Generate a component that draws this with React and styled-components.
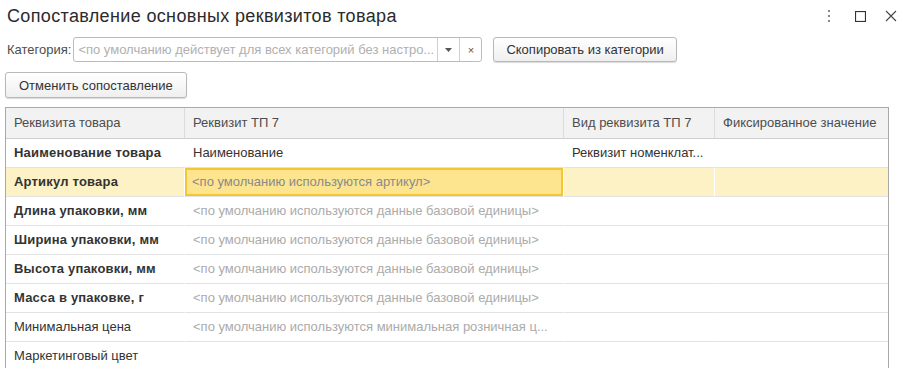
import React from 'react'
import styled, { createGlobalStyle } from 'styled-components'

const GlobalStyle = createGlobalStyle`
  html, body {
    margin: 0;
    padding: 0;
    background: #ffffff;
    overflow: hidden;
  }
  body {
    font-family: "Liberation Sans", Arial, sans-serif;
    font-size: 13px;
    color: #333333;
  }
`

const Window = styled.div`
  width: 907px;
  height: 368px;
  display: flex;
  flex-direction: column;
  overflow: hidden;
  box-sizing: border-box;
  & > * {
    flex-shrink: 0;
  }
`

const TitleBar = styled.div`
  display: flex;
  align-items: center;
  justify-content: space-between;
  height: 32px;
  padding: 0 9px 0 7px;
`

const Title = styled.h1`
  margin: 0;
  font-size: 18px;
  font-weight: 400;
  color: #2b2b2b;
  letter-spacing: 0.35px;
`

const WindowTools = styled.div`
  display: flex;
  align-items: center;
  gap: 17px;
  color: #444444;
`

const ToolIcon = styled.span`
  display: flex;
  align-items: center;
  justify-content: center;
  width: 14px;
  height: 14px;
`

const FieldRow = styled.div`
  display: flex;
  align-items: center;
  padding: 5px 5px 0 7px;
  height: 25px;
`

const Label = styled.span`
  color: #4d4d4d;
  margin-right: 2px;
`

const Combo = styled.div`
  display: flex;
  width: 409px;
  height: 25px;
  box-sizing: border-box;
  border: 1px solid #bcbcbc;
  border-radius: 3px;
  background: #ffffff;
`

const ComboText = styled.div`
  flex: 1;
  padding: 0 4px;
  line-height: 23px;
  color: #b0b0b0;
  white-space: nowrap;
  overflow: hidden;
`

const ComboButton = styled.div`
  width: 21px;
  display: flex;
  align-items: center;
  justify-content: center;
  border-left: 1px solid #cfcfcf;
  color: #555555;
  font-size: 11px;
`

const Button = styled.button`
  font-family: inherit;
  font-size: 13px;
  color: #333333;
  height: ${({ $h }) => $h || 25}px;
  padding: 0 ${({ $px }) => $px || 13}px;
  margin-left: ${({ $ml }) => $ml || 0}px;
  border: 1px solid #b8b8b8;
  border-radius: 3px;
  background: linear-gradient(#ffffff, #efefef);
  box-shadow: 0 1px 1px rgba(0, 0, 0, 0.15);
  cursor: pointer;
`

const ButtonRow = styled.div`
  display: flex;
  padding: 10px 0 0 5px;
`

const Table = styled.div`
  margin: 9px 0 0 5px;
  width: 884px;
  box-sizing: border-box;
  border: 1px solid #a9a9a9;
  border-bottom: none;
  display: grid;
  grid-template-columns: 178px 379px 151px 174px;
`

const HeadCell = styled.div`
  height: 30px;
  line-height: 30px;
  padding: 0 8px;
  background: #f2f2f2;
  color: #4d4d4d;
  border-bottom: 1px solid #d0d0d0;
  border-left: ${({ $first }) => ($first ? 'none' : '1px solid #dcdcdc')};
  white-space: nowrap;
  overflow: hidden;
`

const Cell = styled.div`
  height: 28px;
  line-height: 28px;
  padding: 0 8px;
  box-sizing: content-box;
  border-bottom: 1px solid #e2e2e2;
  border-left: ${({ $first, $selected }) =>
    $first ? 'none' : $selected ? '1px solid #ffffff' : '1px solid transparent'};
  background: ${({ $selected }) => ($selected ? '#fdf2c5' : '#ffffff')};
  font-weight: ${({ $bold }) => ($bold ? 700 : 400)};
  letter-spacing: ${({ $bold }) => ($bold ? '0.2px' : '0')};
  color: ${({ $muted }) => ($muted ? '#ababab' : '#333333')};
  white-space: nowrap;
  overflow: hidden;
  text-overflow: ellipsis;
`

const EditCell = styled.div`
  height: 28px;
  border-bottom: 1px solid #e2e2e2;
  border-left: 1px solid #ffffff;
  background: #fdf2c5;
  display: flex;
`

const EditBox = styled.div`
  flex: 1;
  box-sizing: border-box;
  border: 2px solid #f6c532;
  background: #fde48f;
  color: #8a8a8a;
  line-height: 24px;
  padding: 0 5px;
  white-space: nowrap;
  overflow: hidden;
`

const rows = [
  { name: 'Наименование товара', bold: true, attr: 'Наименование', kind: 'Реквизит номенклат...' },
  { name: 'Артикул товара', bold: true, attr: '<по умолчанию используются артикул>', selected: true },
  { name: 'Длина упаковки, мм', bold: true, attr: '<по умолчанию используются данные базовой единицы>', muted: true },
  { name: 'Ширина упаковки, мм', bold: true, attr: '<по умолчанию используются данные базовой единицы>', muted: true },
  { name: 'Высота упаковки, мм', bold: true, attr: '<по умолчанию используются данные базовой единицы>', muted: true },
  { name: 'Масса в упаковке, г', bold: true, attr: '<по умолчанию используются данные базовой единицы>', muted: true },
  { name: 'Минимальная цена', attr: '<по умолчанию используются минимальная розничная ц...', muted: true },
  { name: 'Маркетинговый цвет', attr: '' },
]

const Kebab = () => (
  <svg width="4" height="12" viewBox="0 0 4 12">
    <rect x="1" y="0" width="2" height="2" fill="#888" />
    <rect x="1" y="5" width="2" height="2" fill="#888" />
    <rect x="1" y="10" width="2" height="2" fill="#888" />
  </svg>
)

const Maximize = () => (
  <svg width="11" height="11" viewBox="0 0 11 11">
    <rect x="0.5" y="0.5" width="10" height="10" fill="none" stroke="#333" strokeWidth="1.2" />
  </svg>
)

const Close = () => (
  <svg width="12" height="12" viewBox="0 0 12 12">
    <path d="M1 1 L11 11 M11 1 L1 11" stroke="#444" strokeWidth="1.1" />
  </svg>
)

const Arrow = () => (
  <svg width="7" height="4" viewBox="0 0 7 4">
    <path d="M0 0 L7 0 L3.5 4 Z" fill="#555" />
  </svg>
)

export default function App() {
  return (
    <Window>
      <GlobalStyle />
      <TitleBar>
        <Title>Сопоставление основных реквизитов товара</Title>
        <WindowTools>
          <ToolIcon><Kebab /></ToolIcon>
          <ToolIcon><Maximize /></ToolIcon>
          <ToolIcon><Close /></ToolIcon>
        </WindowTools>
      </TitleBar>

      <FieldRow>
        <Label>Категория:</Label>
        <Combo>
          <ComboText>&lt;по умолчанию действует для всех категорий без настро...</ComboText>
          <ComboButton><Arrow /></ComboButton>
          <ComboButton>×</ComboButton>
        </Combo>
        <Button $ml={11} $px={12}>Скопировать из категории</Button>
      </FieldRow>

      <ButtonRow>
        <Button $h={26} $px={13}>Отменить сопоставление</Button>
      </ButtonRow>

      <Table>
        <HeadCell $first>Реквизита товара</HeadCell>
        <HeadCell>Реквизит ТП 7</HeadCell>
        <HeadCell>Вид реквизита ТП 7</HeadCell>
        <HeadCell>Фиксированное значение</HeadCell>
        {rows.map((r) => (
          <React.Fragment key={r.name}>
            <Cell $first $bold={r.bold} $selected={r.selected}>{r.name}</Cell>
            {r.selected ? (
              <EditCell><EditBox>{r.attr}</EditBox></EditCell>
            ) : (
              <Cell $muted={r.muted}>{r.attr}</Cell>
            )}
            <Cell $selected={r.selected}>{r.kind || ''}</Cell>
            <Cell $selected={r.selected}></Cell>
          </React.Fragment>
        ))}
      </Table>
    </Window>
  )
}
